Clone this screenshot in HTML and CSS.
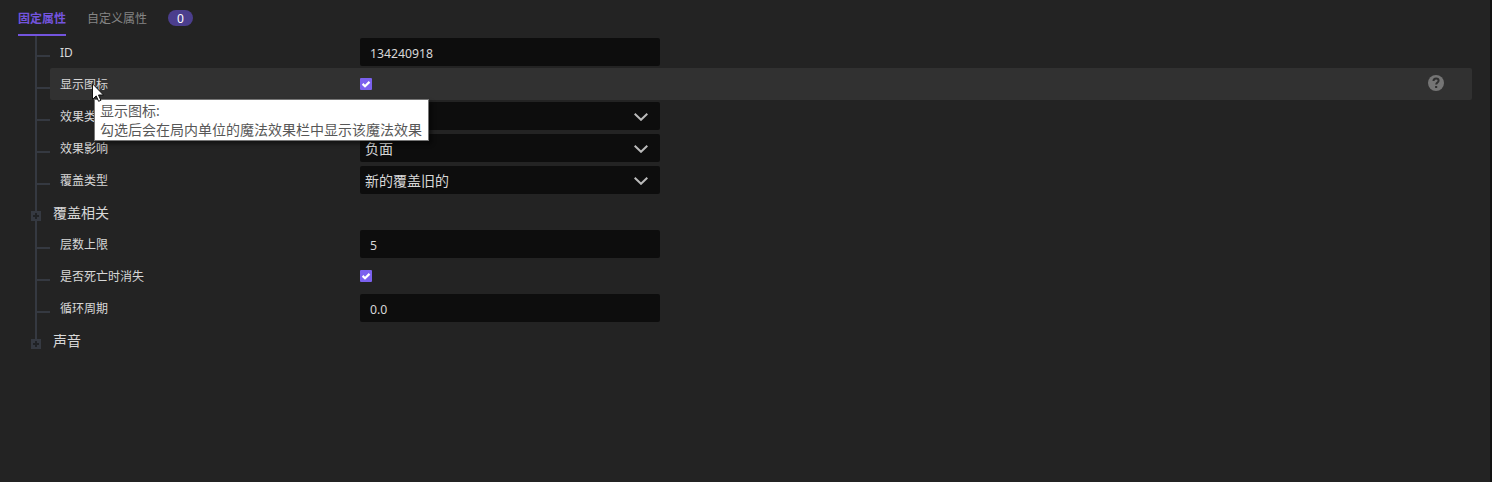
FILE: index.html
```html
<!DOCTYPE html>
<html lang="zh-CN">
<head>
<meta charset="utf-8">
<title>固定属性</title>
<link rel="stylesheet" href="styles.css">
</head>
<body>
<main class="panel">
  <nav class="tabs">
    <span class="tab tab-active">固定属性</span>
    <span class="tab">自定义属性</span>
    <span class="count">0</span>
  </nav>
  <section class="tree">
    <div class="row"><div class="branch"><i class="tick"></i></div><div class="body"><label class="label">ID</label><div class="field">134240918</div></div></div>
    <div class="row"><div class="branch"><i class="tick"></i></div><div class="body body-hover"><label class="label">显示图标</label>
      <svg class="check" viewBox="0 0 12 12"><rect width="12" height="12" rx="1" fill="#7b61ee"/><path d="M2.6 5.9 5 8.2 9.5 3.9" fill="none" stroke="#fff" stroke-width="2.2"/></svg>
      <svg class="help" viewBox="0 0 16 16"><circle cx="8" cy="8" r="8" fill="#757575"/><path d="M5.5 6.1C5.5 4.5 6.6 3.6 8.1 3.6s2.5.9 2.5 2.2c0 1.8-2.4 1.8-2.4 3.8" fill="none" stroke="#303030" stroke-width="2"/><rect x="7.1" y="11" width="2.1" height="2" fill="#303030"/></svg>
    </div></div>
    <div class="row"><div class="branch"><i class="tick"></i></div><div class="body"><label class="label">效果类型</label><div class="field select"><span></span><svg class="arrow" viewBox="0 0 14 8"><path d="M.7.8 7 6.8 13.3.8"/></svg></div></div></div>
    <div class="row"><div class="branch"><i class="tick"></i></div><div class="body"><label class="label">效果影响</label><div class="field select"><span>负面</span><svg class="arrow" viewBox="0 0 14 8"><path d="M.7.8 7 6.8 13.3.8"/></svg></div></div></div>
    <div class="row"><div class="branch"><i class="tick"></i></div><div class="body"><label class="label">覆盖类型</label><div class="field select"><span>新的覆盖旧的</span><svg class="arrow" viewBox="0 0 14 8"><path d="M.7.8 7 6.8 13.3.8"/></svg></div></div></div>
    <div class="row"><svg class="node" viewBox="0 0 50 32"><path d="M35 0h2v32h-2z" fill="#353941"/><rect x="31" y="15" width="10" height="10" fill="#353941"/><path d="M35 17h2v2h2v2h-2v2h-2v-2h-2v-2h2z" fill="#202225"/></svg><span class="group">覆盖相关</span></div>
    <div class="row"><div class="branch"><i class="tick"></i></div><div class="body"><label class="label">层数上限</label><div class="field">5</div></div></div>
    <div class="row"><div class="branch"><i class="tick"></i></div><div class="body"><label class="label">是否死亡时消失</label>
      <svg class="check" viewBox="0 0 12 12"><rect width="12" height="12" rx="1" fill="#7b61ee"/><path d="M2.6 5.9 5 8.2 9.5 3.9" fill="none" stroke="#fff" stroke-width="2.2"/></svg></div></div>
    <div class="row"><div class="branch"><i class="tick"></i></div><div class="body"><label class="label">循环周期</label><div class="field">0.0</div></div></div>
    <div class="row"><svg class="node" viewBox="0 0 50 32"><path d="M35 0h2v15h-2z" fill="#353941"/><rect x="31" y="15" width="10" height="10" fill="#353941"/><path d="M35 17h2v2h2v2h-2v2h-2v-2h-2v-2h2z" fill="#202225"/></svg><span class="group">声音</span></div>
  </section>
</main>
<div class="tooltip">显示图标:<br>勾选后会在局内单位的魔法效果栏中显示该魔法效果</div>
<svg class="cursor" viewBox="0 0 12 19"><path d="M.5.8v15.6l3.7-3.5 2.4 5.4 2.3-1-2.4-5.3h5z" fill="#fff" stroke="#111" stroke-width="1"/></svg>
</body>
</html>
```
FILE: styles.css
```css
* { box-sizing: border-box; }
body {
  margin: 0;
  height: 482px;
  overflow: hidden;
  background: #232323;
  color: #d8d8d8;
  font: 12px/16px "Noto Sans", "Noto Sans CJK SC", sans-serif;
}
.panel { height: 482px; border-right: 2px solid #121212; }
.tabs { display: flex; height: 36px; padding-left: 18px; }
.tab {
  height: 36px;
  margin-right: 21px;
  color: #858585;
  line-height: 38px;
  white-space: nowrap;
}
.tab-active { color: #7354de; border-bottom: 2px solid #7354de; font-weight: 700; }
.count {
  width: 25px;
  height: 16px;
  margin-top: 10px;
  border-radius: 8px;
  background: #4b3e8d;
  color: #fff;
  line-height: 18px;
  text-align: center;
}
.row { display: flex; height: 32px; padding-right: 18px; }
.branch { width: 15px; margin-left: 35px; border-left: 2px solid #353941; flex: none; }
.tick { display: block; height: 2px; margin-top: 19px; background: #353941; }
.body { display: flex; flex: 1; align-items: center; padding-left: 10px; border-radius: 2px; }
.body-hover { background: #313131; }
.label { width: 300px; padding-top: 2px; flex: none; }
.field {
  width: 300px;
  height: 28px;
  padding: 2px 10px 0;
  border-radius: 2px;
  background: #0d0d0d;
  font-size: 12.25px;
  line-height: 27px;
}
.select {
  display: flex;
  align-items: center;
  justify-content: space-between;
  padding: 0 12px 0 5px;
  font-size: 14px;
}
.arrow { width: 14px; height: 8px; margin-top: 1px; fill: none; stroke: #bababa; stroke-width: 2; }
.check { width: 12px; height: 12px; }
.help { width: 16px; height: 16px; margin: 0 28px 2px auto; }
.node { width: 50px; height: 32px; flex: none; }
.group { padding-left: 3px; font-size: 14px; line-height: 34px; }
.tooltip {
  position: absolute;
  left: 94px;
  top: 99px;
  width: 335px;
  height: 42px;
  padding: 1px 5px;
  border: 1px solid #767676;
  background: #fff;
  box-shadow: 3px 3px 4px rgba(0, 0, 0, .45);
  color: #575757;
  font-size: 14px;
  line-height: 19px;
  white-space: nowrap;
}
.cursor { position: absolute; left: 92px; top: 83px; width: 12px; height: 19px; overflow: visible; }
```
